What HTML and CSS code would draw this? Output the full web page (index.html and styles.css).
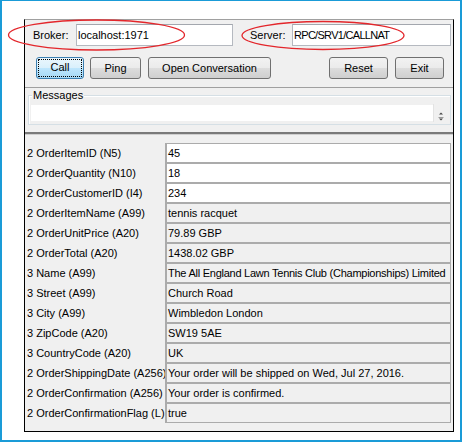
FILE: index.html
```html
<!DOCTYPE html>
<html>
<head>
<meta charset="utf-8">
<link rel="stylesheet" href="styles.css">
</head>
<body>
<div class="frame">
  <div class="panel">
    <div class="conn">
      <span class="lbl broker-lbl">Broker:</span>
      <div class="field broker">localhost:1971</div>
      <span class="lbl server-lbl">Server:</span>
      <div class="field server">RPC/SRV1/CALLNAT</div>
    </div>
    <div class="actions">
      <button class="btn call"><span class="focus">Call</span></button>
      <button class="btn ping">Ping</button>
      <button class="btn open">Open Conversation</button>
      <span class="spacer"></span>
      <button class="btn reset">Reset</button>
      <button class="btn exit">Exit</button>
    </div>
    <div class="sep"></div>
    <div class="group">
      <div class="legend">Messages</div>
      <div class="msg">
        <div class="msg-text"></div>
        <div class="spin">
          <svg width="14" height="18" viewBox="0 0 14 18">
            <path d="M5 10.5 L7 8.5 L9 10.5 Z" fill="#444"/>
            <path d="M4.5 13.5 H9.5" stroke="#9a9a9a" stroke-width="1"/>
            <path d="M5 14.5 L9 14.5 L7 16.5 Z" fill="#444"/>
          </svg>
        </div>
      </div>
    </div>
    <div class="sep2"></div>
    <div class="grid">
      <div class="name">2 OrderItemID (N5)</div><div class="val rw">45</div>
      <div class="name">2 OrderQuantity (N10)</div><div class="val rw">18</div>
      <div class="name">2 OrderCustomerID (I4)</div><div class="val rw">234</div>
      <div class="name">2 OrderItemName (A99)</div><div class="val">tennis racquet</div>
      <div class="name">2 OrderUnitPrice (A20)</div><div class="val">79.89 GBP</div>
      <div class="name">2 OrderTotal (A20)</div><div class="val">1438.02 GBP</div>
      <div class="name">3 Name (A99)</div><div class="val long">The All England Lawn Tennis Club (Championships) Limited</div>
      <div class="name">3 Street (A99)</div><div class="val">Church Road</div>
      <div class="name">3 City (A99)</div><div class="val">Wimbledon London</div>
      <div class="name">3 ZipCode (A20)</div><div class="val">SW19 5AE</div>
      <div class="name">3 CountryCode (A20)</div><div class="val">UK</div>
      <div class="name">2 OrderShippingDate (A256)</div><div class="val">Your order will be shipped on Wed, Jul 27, 2016.</div>
      <div class="name">2 OrderConfirmation (A256)</div><div class="val">Your order is confirmed.</div>
      <div class="name">2 OrderConfirmationFlag (L)</div><div class="val">true</div>
    </div>
  </div>
  <svg class="annot" width="462" height="442" viewBox="0 0 462 442">
    <ellipse cx="96.5" cy="35" rx="88" ry="15" fill="none" stroke="#e3262b" stroke-width="1.3"/>
    <ellipse cx="323" cy="35.5" rx="81" ry="14" fill="none" stroke="#e3262b" stroke-width="1.3"/>
  </svg>
</div>
</body>
</html>
```

FILE: styles.css
```css
html, body {
  margin: 0;
  padding: 0;
  background: #ffffff;
}

body {
  font-family: "Liberation Sans", Arial, sans-serif;
  font-size: 11px;
  color: #000;
}

.frame {
  position: relative;
  box-sizing: border-box;
  width: 462px;
  height: 442px;
  border: 2px solid #1a9bd7;
  border-top-width: 1px;
  background: #ffffff;
  padding: 18px 0 0 22px;
}

.panel {
  box-sizing: border-box;
  width: 430px;
  height: 413px;
  background: #f0f0f0;
  border: 1px solid #000;
  border-top-color: #a0a0a0;
  display: flex;
  flex-direction: column;
}

/* connection row */
.conn {
  display: flex;
  align-items: center;
  height: 22px;
  margin-top: 4px;
  padding-left: 8px;
}

.lbl {
  white-space: nowrap;
}

.broker-lbl {
  width: 43px;
}

.server-lbl {
  width: 42px;
  margin-left: 17px;
}

.field {
  box-sizing: border-box;
  height: 22px;
  line-height: 20px;
  padding-left: 1px;
  background: #fff;
  border: 1px solid #b5b9c0;
  border-top-color: #a3a7ae;
  white-space: nowrap;
}

.broker {
  width: 157px;
}

.server {
  width: 159px;
  letter-spacing: -0.7px;
}

/* buttons */
.actions {
  display: flex;
  height: 22px;
  margin-top: 11px;
  padding: 0 9px 0 11px;
}

.spacer {
  flex: 1;
}

.btn {
  box-sizing: border-box;
  height: 22px;
  padding: 0;
  margin: 0;
  border: 1px solid #707070;
  border-radius: 3px;
  background: linear-gradient(#f2f2f2 0%, #ebebeb 50%, #dddddd 50%, #cfcfcf 100%);
  font: inherit;
  color: #000;
  line-height: 18px;
  text-align: center;
}

.btn.call {
  width: 48px;
  margin-right: 6px;
  padding: 1px;
  display: flex;
  border-color: #3c7fb1;
  background: linear-gradient(#eaf6fd 0%, #d9f0fc 50%, #bee6fd 50%, #a7d9f5 100%);
}

.focus {
  flex: 1;
  border: 1px dotted #000;
  line-height: 14px;
}

.btn.ping {
  width: 51px;
  margin-right: 7px;
}

.btn.open {
  width: 123px;
}

.btn.reset {
  width: 59px;
  margin-right: 7px;
}

.btn.exit {
  width: 49px;
}

/* separators */
.sep {
  height: 1px;
  margin-top: 8px;
  background: #a0a0a0;
}

.sep2 {
  margin-top: 7px;
  border-top: 2px solid #7a7a7a;
  border-bottom: 1px solid #cfcfcf;
}

/* messages group */
.group {
  margin: 7px 2px 0 3px;
  border: 1px solid #d5dfe5;
  box-shadow: inset 1px 1px 0 #fff;
}

.legend {
  width: max-content;
  height: 13px;
  line-height: 13px;
  margin: -7px 0 0 3px;
  padding: 0 1px;
  background: #f0f0f0;
  color: #000;
}

.msg {
  display: flex;
  height: 16px;
  margin: 3px 2px 3px 2px;
}

.msg-text {
  flex: 1;
  background: #fff;
}

.spin {
  width: 14px;
  height: 18px;
  margin-top: -1px;
  border-left: 1px solid #e3e3e3;
  background: #f0f0f0;
}

.spin svg {
  display: block;
}

/* field grid */
.grid {
  display: grid;
  grid-template-columns: 140px 1fr;
  margin: 8px 2px 0 0;
}

.name {
  height: 20px;
  line-height: 20px;
  padding-left: 2px;
  white-space: nowrap;
}

.val {
  box-sizing: border-box;
  height: 20px;
  line-height: 18px;
  padding-left: 1px;
  border: 1px solid #ababab;
  border-left-width: 2px;
  background: #f0f0f0;
  white-space: nowrap;
  overflow: hidden;
}

.val.long {
  letter-spacing: -0.25px;
}

.val.rw {
  background: #fff;
}

/* annotations */
.annot {
  position: absolute;
  left: -2px;
  top: -1px;
  pointer-events: none;
}
```
